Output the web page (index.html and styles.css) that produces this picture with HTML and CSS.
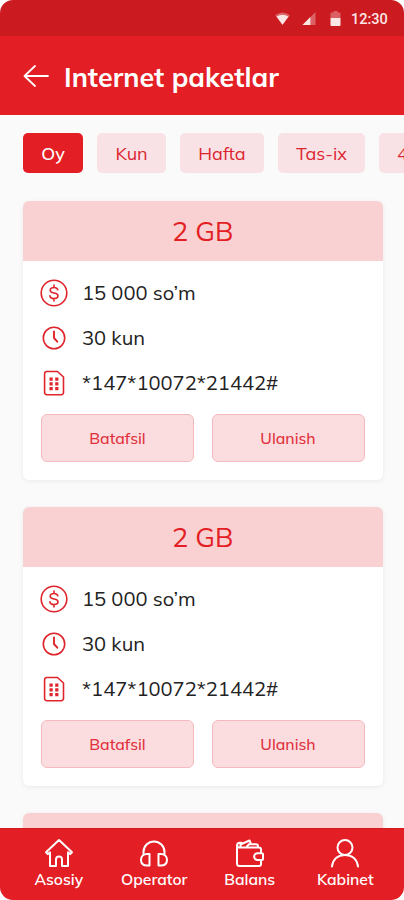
FILE: index.html
```
<!DOCTYPE html>
<html lang="uz">
<head>
<meta charset="utf-8">
<title>Internet paketlar</title>
<link rel="stylesheet" href="styles.css">
</head>
<body>
<svg width="0" height="0" class="defs">
  <symbol id="coin" viewBox="0 0 28 28"><circle cx="14" cy="14" r="12.8"/><path d="M17.8 10.8c-.4-1.5-1.900-2.300-3.800-2.300-2.200 0-3.800 1-3.800 2.700 0 4 7.800 1.700 7.800 5.600 0 1.700-1.700 2.700-4 2.700s-3.900-1-4.100-2.700M14 6v2.500M14 19.500V22"/></symbol>
  <symbol id="clock" viewBox="0 0 28 28"><circle cx="14" cy="14" r="10.700"/><path d="M14 7.500V14l3.300 3.700" stroke-width="1.900"/></symbol>
  <symbol id="sim" viewBox="0 0 28 28"><path d="M6.800 2.500h10.700l6 5.500v15.500a2.200 2.200 0 0 1-2.200 2.200H6.800a2.200 2.200 0 0 1-2.200-2.200V4.700a2.200 2.200 0 0 1 2.200-2.200z"/><path class="dots" d="M9.500 8.500h3.200v3.200H9.500zM15.200 8.500h3.200v3.200h-3.200zM9.500 13.200h3.200v3.200H9.500zM15.200 13.200h3.200v3.200h-3.200zM9.500 18h3.200v3.200H9.500zM15.200 18h3.200v3.200h-3.200z"/></symbol>
</svg>
<div class="screen">
  <div class="status">
    <svg class="wifi" viewBox="0 0 16 14"><path d="M0 3.500Q8-2.500 16 3.500L8 14z" opacity=".35"/><path d="M1.600 4.800Q8 1.200 14.400 4.800L8 13.800z"/></svg>
    <svg class="signal" viewBox="0 0 14 14"><path d="M14 0v14H0z" opacity=".35"/><path d="M8.500 5.500V14H0z"/></svg>
    <svg class="battery" viewBox="0 0 10 15"><path d="M3 0h4v1.500h2A1 1 0 0 1 10 2.500V7H0V2.500A1 1 0 0 1 1 1.500h2z" opacity=".35"/><path d="M0 7h10v7a1 1 0 0 1-1 1H1a1 1 0 0 1-1-1z"/></svg>
    <span class="time">12:30</span>
  </div>
  <header class="header">
    <svg class="back" viewBox="0 0 28 24"><path d="M26 12H2.500M13 2 2.500 12 13 22"/></svg>
    <h1>Internet paketlar</h1>
  </header>
  <main class="content">
    <div class="chips">
      <span class="chip active">Oy</span>
      <span class="chip kun">Kun</span>
      <span class="chip hafta">Hafta</span>
      <span class="chip tasix">Tas-ix</span>
      <span class="chip four">4G</span>
    </div>
    <section class="card">
      <h2>2 GB</h2>
      <div class="row price"><svg><use href="#coin"/></svg><span>15 000 so’m</span></div>
      <div class="row days"><svg><use href="#clock"/></svg><span>30 kun</span></div>
      <div class="row code"><svg><use href="#sim"/></svg><span>*147*10072*21442#</span></div>
      <div class="actions"><button>Batafsil</button><button class="connect">Ulanish</button></div>
    </section>
    <section class="card">
      <h2>2 GB</h2>
      <div class="row price"><svg><use href="#coin"/></svg><span>15 000 so’m</span></div>
      <div class="row days"><svg><use href="#clock"/></svg><span>30 kun</span></div>
      <div class="row code"><svg><use href="#sim"/></svg><span>*147*10072*21442#</span></div>
      <div class="actions"><button>Batafsil</button><button class="connect">Ulanish</button></div>
    </section>
    <section class="card"><h2></h2></section>
  </main>
  <nav class="nav">
    <a><svg viewBox="0 0 30 30"><path d="M15 2 2 14.200l1.800 1.900L6 14.300V28h6v-6.500a3 3 0 0 1 6 0V28h6V14.300l2.200 1.800 1.800-1.900z"/></svg><span>Asosiy</span></a>
    <a><svg viewBox="0 0 30 30"><path d="M4.500 17V14a10.500 10.500 0 0 1 21 0v3M10.500 16v11.500H8.200C4 27.500 2 25 2 21.700S4.300 16 8.200 16zM19.500 16v11.500h2.300c4.200 0 6.200-2.500 6.200-5.800S25.700 16 21.800 16z"/></svg><span>Operator</span></a>
    <a><svg viewBox="0 0 30 30"><path d="M26 15.200V11.500a2 2 0 0 0-2-2H4.500A2.500 2.500 0 0 1 2 7v18.500A2.500 2.500 0 0 0 4.500 28H24a2 2 0 0 0 2-2v-4M2 7.500c0-2 1.200-2.800 3-2.800h1.500M5.500 9V6.500L14.500 2.500l1.500 3.700M12 8.500l2-2.300h7a2 2 0 0 1 2 2v1M27 15.200h-4.500a3.400 3.400 0 0 0 0 6.800H27a1 1 0 0 0 1-1v-4.800a1 1 0 0 0-1-1z"/></svg><span>Balans</span></a>
    <a><svg viewBox="0 0 30 30"><circle cx="15" cy="9.500" r="7.500"/><path d="M2 28.500c1-8 6.500-11.500 13-11.500s12 3.500 13 11.500"/></svg><span>Kabinet</span></a>
  </nav>
</div>
</body>
</html>
```
FILE: styles.css
```
* { box-sizing: border-box; }
body { margin: 0; background: #fff; font-family: Mulish, "Noto Sans", sans-serif; }
svg { fill: none; stroke: currentColor; stroke-width: 1.600; stroke-linejoin: round; stroke-linecap: round; flex: none; }
.defs { position: absolute; }
.screen { width: 404px; height: 900px; border-radius: 13px; overflow: hidden; background: #fafafa; display: flex; flex-direction: column; }
.status { height: 36px; flex: none; background: #cb1b20; color: #fbe6e6; display: flex; align-items: center; justify-content: flex-end; padding: 1px 17px 0 0; }
.status svg { fill: currentColor; stroke: none; }
.wifi { width: 15px; height: 13px; margin-right: 12px; }
.signal { width: 14px; height: 13px; margin-right: 14px; }
.battery { width: 11px; height: 15px; margin-right: 10px; }
.time { font: 500 14.500px/16px Roboto, sans-serif; width: 36px; padding-top: 2px; white-space: nowrap; }
.header { height: 79px; flex: none; background: #e31e24; color: #fff; display: flex; align-items: center; padding: 2px 0 0 22px; }
.back { width: 28px; height: 24px; margin: 0 14px 2px 0; stroke-width: 1.800; }
h1 { margin: 0; font-size: 26.900px; line-height: 34px; font-weight: 700; white-space: nowrap; }
.content { flex: 1; min-height: 0; overflow: hidden; padding: 18px 21.500px 0 23px; }
.chips { display: flex; gap: 14px; width: 460px; height: 40px; margin-bottom: 28px; }
.chip { width: 69px; border-radius: 5px; background: #f9e2e5; color: #dc2531; font-size: 18px; line-height: 42px; text-align: center; }
.chip.active { width: 60px; background: #e31e24; color: #fff; font-weight: 500; }
.chip.hafta { width: 84px; }
.chip.tasix { width: 87px; }
.chip.four { padding-left: 18px; text-align: left; }
.card { height: 279px; margin-bottom: 27px; border-radius: 6px; background: #fff; box-shadow: 0 1px 5px rgba(0,0,0,.07); overflow: hidden; }
h2 { margin: 0 0 9px; height: 60px; background: #f9d1d3; color: #e31e24; font-size: 27px; line-height: 61px; font-weight: 400; text-align: center; }
.row { display: flex; align-items: center; height: 45px; padding-left: 17px; gap: 14px; color: #222; font-size: 20.100px; white-space: nowrap; }
.row svg { width: 28px; height: 28px; color: #df252b; }
.dots { fill: currentColor; stroke: none; }
.actions { display: flex; gap: 17.500px; padding: 9px 18px 0; }
button { flex: 1; height: 48px; border: 1px solid #f4b9be; border-radius: 6px; background: #fbdde0; color: #e0303b; font: 500 15.800px/20px Mulish, "Noto Sans", sans-serif; padding: 0; }
.nav { height: 72px; flex: none; background: #e31e24; border-top: 1px solid #d3191f; color: #fff; display: flex; padding: 9px 11px 0; }
.nav a { flex: 1; display: flex; flex-direction: column; align-items: center; font-size: 15.700px; line-height: 20px; font-weight: 600; }
.nav svg { width: 30px; height: 30px; stroke-width: 2; margin-bottom: 1px; }
```
